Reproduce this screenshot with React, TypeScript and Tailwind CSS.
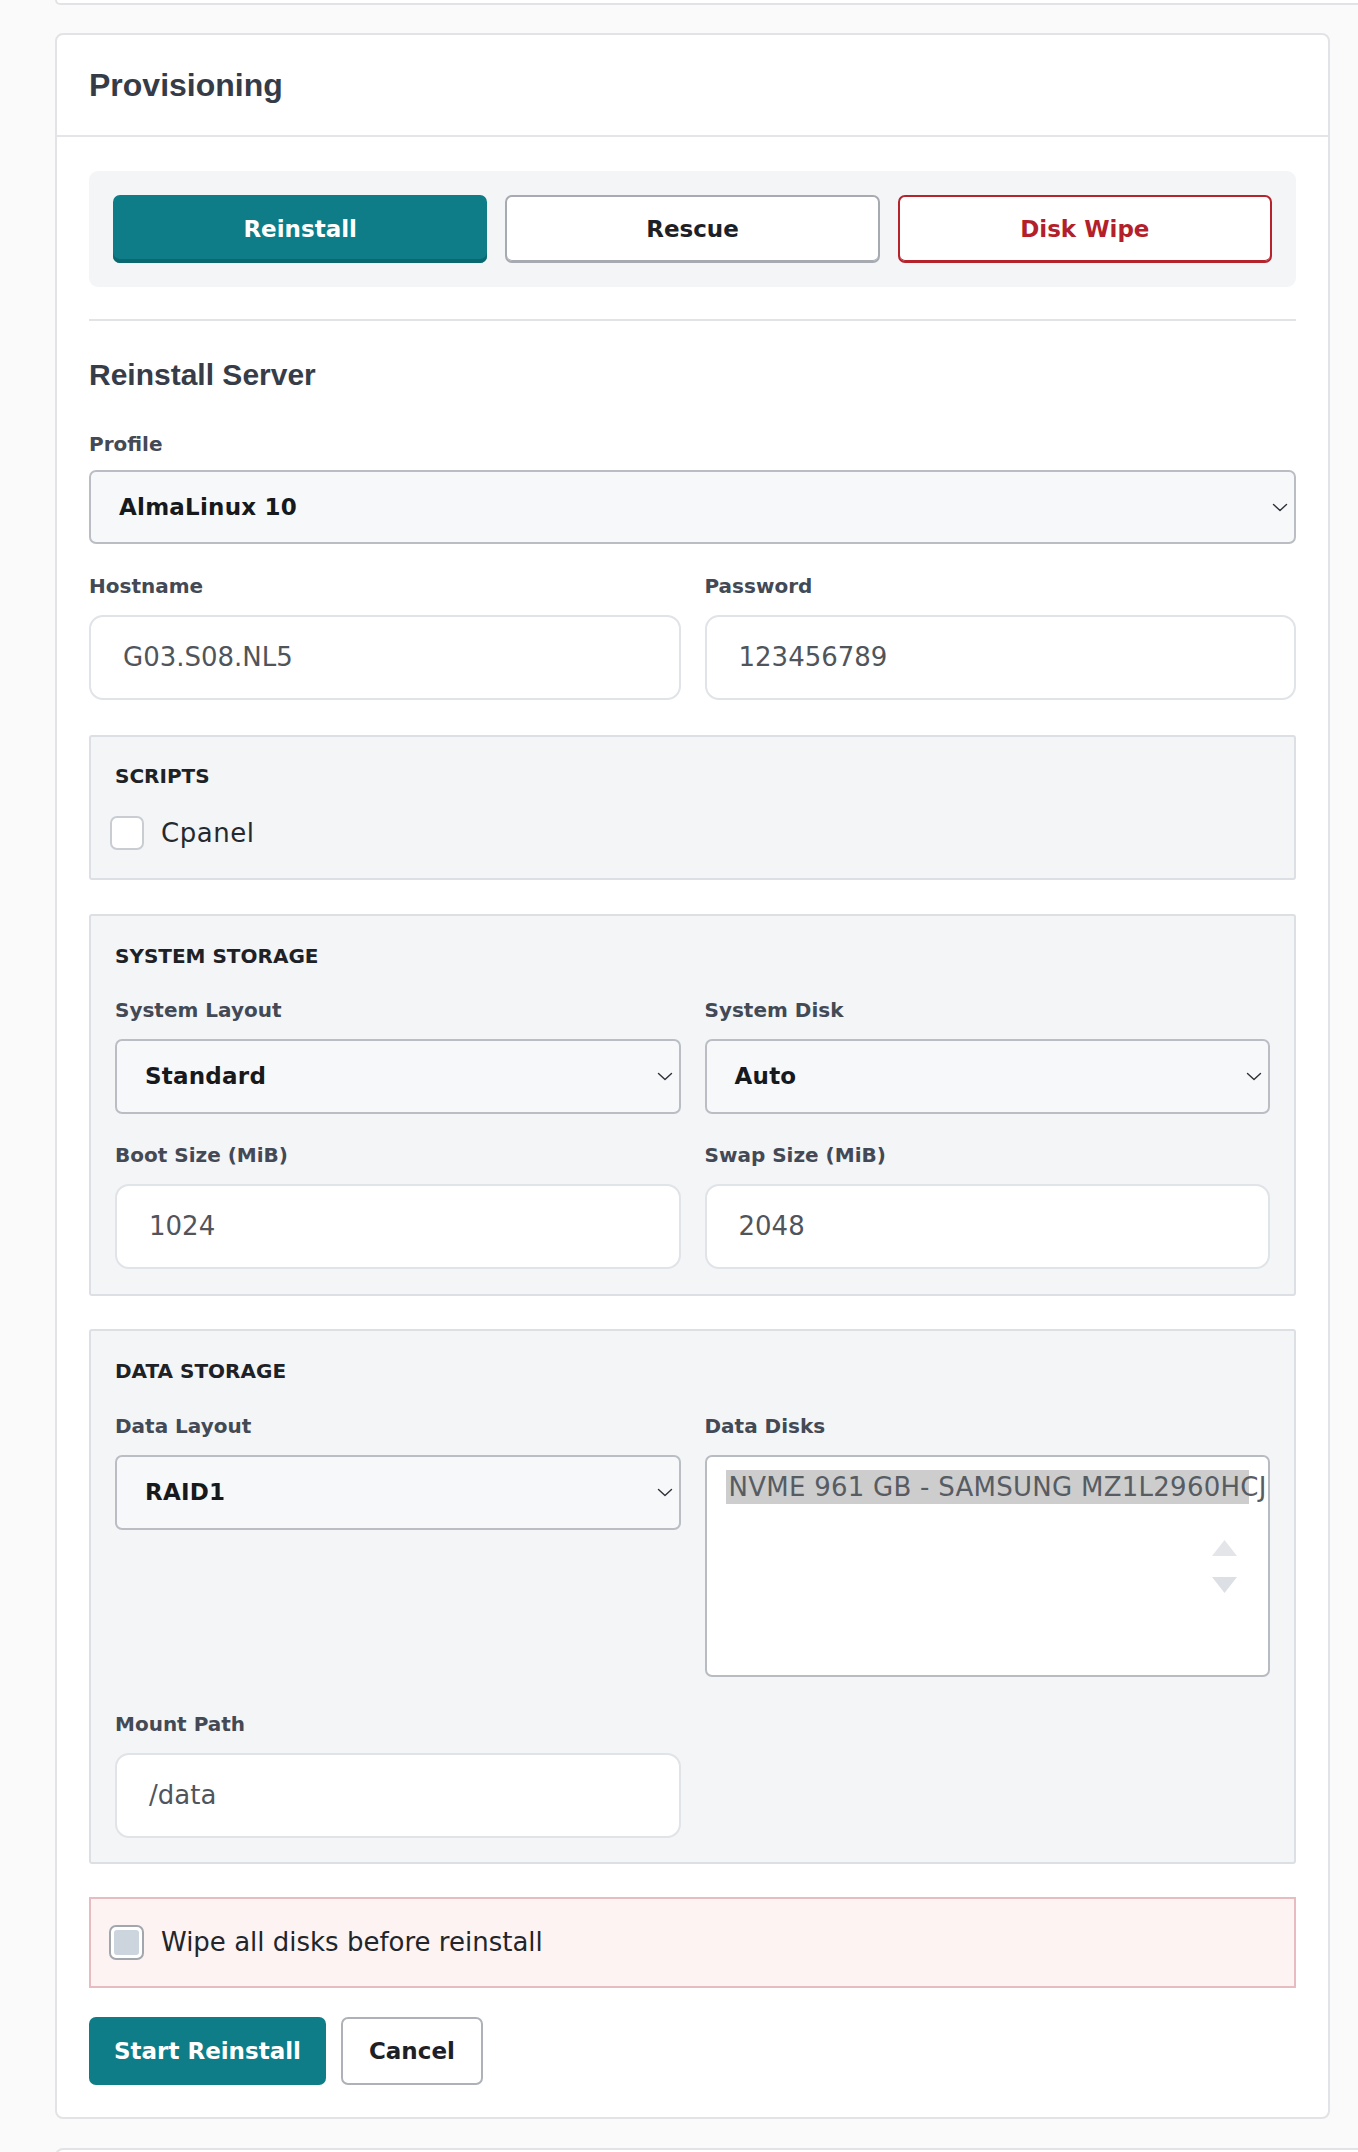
import React from "react";

const Chevron = () => (
  <svg width="16" height="9" viewBox="0 0 16 9" fill="none" aria-hidden="true">
    <path d="M1.5 1.5l6.5 6 6.5-6" stroke="#2d3136" strokeWidth="1.4" strokeLinecap="round" strokeLinejoin="round" />
  </svg>
);

function Label({ children, tight }: { children: React.ReactNode; tight?: boolean }) {
  return (
    <div
      className={
        "font-['DejaVu_Sans',sans-serif] font-bold text-[20px] leading-[26px] text-[#434955] " +
        (tight ? "mb-[13px]" : "mb-[16px]")
      }
    >
      {children}
    </div>
  );
}

function SelectBox({ value, tall }: { value: string; tall?: boolean }) {
  return (
    <div
      className={
        "flex items-center justify-between pl-[28px] pr-[6px] bg-[#f6f8fa] border-2 border-[#babec4] rounded-[7px] " +
        (tall ? "h-[75px]" : "h-[74px]")
      }
    >
      <span className="font-['DejaVu_Sans',sans-serif] font-bold text-[23px] tracking-[0.01em] text-[#17191c]">{value}</span>
      <Chevron />
    </div>
  );
}

function InputBox({ value }: { value: string }) {
  return (
    <div className="h-[85px] flex items-center pl-[32px] bg-white border-2 border-[#e0e3e7] rounded-[14px]">
      <span className="font-['DejaVu_Sans',sans-serif] text-[26px] text-[#50555c]">{value}</span>
    </div>
  );
}

function SectionTitle({ children }: { children: React.ReactNode }) {
  return (
    <div className="font-['DejaVu_Sans',sans-serif] font-bold text-[20px] leading-[26px] text-[#1e2226]">
      {children}
    </div>
  );
}

export default function App() {
  return (
    <div className="h-[2152px] overflow-hidden bg-[#fafafa] pl-[55px] font-['DejaVu_Sans',sans-serif]">
      {/* previous card (bottom edge) */}
      <div className="w-[1340px] h-[5px] border-2 border-t-0 border-[#e1e3e6] rounded-b-[8px] bg-white" />

      {/* Provisioning card */}
      <div className="mt-[28px] w-[1275px] border-2 border-[#e1e3e6] rounded-[8px] bg-white">
        <div className="h-[102px] border-b-2 border-[#e3e5e8] flex items-center px-[32px]">
          <h2 className="font-['Liberation_Sans',Arial,sans-serif] font-bold text-[32px] leading-[38px] text-[#353b47]">
            Provisioning
          </h2>
        </div>

        <div className="px-[32px] pt-[34px] pb-[32px]">
          {/* mode tabs */}
          <div className="bg-[#f3f5f7] rounded-[9px] p-[24px] grid grid-cols-3 gap-[18px]">
            <div className="h-[68px] rounded-[7px] bg-[#0e7d87] shadow-[inset_0_-4px_0_#0a6870] flex items-center justify-center text-white font-bold text-[23px]">
              Reinstall
            </div>
            <div className="h-[68px] rounded-[7px] bg-white border-2 border-[#a7abb1] shadow-[inset_0_-1px_0_#a7abb1] flex items-center justify-center text-[#1d2126] font-bold text-[23px]">
              Rescue
            </div>
            <div className="h-[68px] rounded-[7px] bg-white border-2 border-[#b5232d] shadow-[inset_0_-1px_0_#b5232d] flex items-center justify-center text-[#b31f2b] font-bold text-[23px]">
              Disk Wipe
            </div>
          </div>

          <div className="mt-[32px] h-[2px] bg-[#e2e3e5]" />

          <h3 className="mt-[36px] font-['Liberation_Sans',Arial,sans-serif] font-bold text-[30px] leading-[36px] text-[#363c48]">
            Reinstall Server
          </h3>

          <div className="mt-[38px]">
            <Label tight>Profile</Label>
            <SelectBox value="AlmaLinux 10" />
          </div>

          <div className="mt-[29px] grid grid-cols-2 gap-x-[24px]">
            <div>
              <Label>Hostname</Label>
              <InputBox value="G03.S08.NL5" />
            </div>
            <div>
              <Label>Password</Label>
              <InputBox value="123456789" />
            </div>
          </div>

          {/* Scripts */}
          <div className="mt-[35px] bg-[#f3f5f7] border-2 border-[#dcdfe3] rounded-[3px] px-[24px] pt-[26px] pb-[25px]">
            <SectionTitle>SCRIPTS</SectionTitle>
            <div className="mt-[24px] -ml-[5px] h-[40px] flex items-center gap-[17px]">
              <div className="w-[34px] h-[34px] rounded-[7px] border-2 border-[#c9cdd2] bg-white" />
              <span className="text-[26px] tracking-[0.02em] text-[#26292e]">Cpanel</span>
            </div>
          </div>

          {/* System storage */}
          <div className="mt-[34px] bg-[#f3f5f7] border-2 border-[#dcdfe3] rounded-[3px] px-[24px] pt-[27px] pb-[25px]">
            <SectionTitle>SYSTEM STORAGE</SectionTitle>
            <div className="mt-[28px] grid grid-cols-2 gap-x-[24px] gap-y-[28px]">
              <div>
                <Label>System Layout</Label>
                <SelectBox value="Standard" tall />
              </div>
              <div>
                <Label>System Disk</Label>
                <SelectBox value="Auto" tall />
              </div>
              <div>
                <Label>Boot Size (MiB)</Label>
                <InputBox value="1024" />
              </div>
              <div>
                <Label>Swap Size (MiB)</Label>
                <InputBox value="2048" />
              </div>
            </div>
          </div>

          {/* Data storage */}
          <div className="mt-[33px] bg-[#f3f5f7] border-2 border-[#dcdfe3] rounded-[3px] px-[24px] pt-[27px] pb-[24px]">
            <SectionTitle>DATA STORAGE</SectionTitle>
            <div className="mt-[29px] grid grid-cols-2 gap-x-[24px] gap-y-[34px] items-start">
              <div>
                <Label>Data Layout</Label>
                <SelectBox value="RAID1" tall />
              </div>
              <div>
                <Label>Data Disks</Label>
                <div className="relative h-[222px] bg-white border-2 border-[#b8bcc2] rounded-[7px] pt-[13px] px-[19px] overflow-hidden">
                  <div className="h-[34px] leading-[34px] bg-[#cdcdcd] pl-[3px] whitespace-nowrap text-[26px] tracking-[0.01em] text-[#575c63]">
                    NVME 961 GB - SAMSUNG MZ1L2960HCJ
                  </div>
                  <svg
                    className="absolute left-[505px] top-[83px]"
                    width="25"
                    height="53"
                    viewBox="0 0 25 53"
                    aria-hidden="true"
                  >
                    <polygon points="12.5,0 25,16 0,16" fill="#e3e5e9" />
                    <polygon points="0,37 25,37 12.5,53" fill="#dcdfe4" />
                  </svg>
                </div>
              </div>
              <div>
                <Label>Mount Path</Label>
                <InputBox value="/data" />
              </div>
            </div>
          </div>

          {/* Wipe */}
          <div className="mt-[33px] h-[91px] bg-[#fdf3f3] border-2 border-[#e6bcc0] flex items-center pl-[18px] gap-[17px]">
            <div className="w-[35px] h-[35px] rounded-[7px] border-2 border-[#a2a7ae] bg-white p-[3px]">
              <div className="w-full h-full rounded-[3px] bg-[#ccd4dd]" />
            </div>
            <span className="text-[26px] text-[#222529]">Wipe all disks before reinstall</span>
          </div>

          {/* Actions */}
          <div className="mt-[29px] flex gap-[15px]">
            <div className="h-[68px] px-[25px] rounded-[7px] bg-[#0e7d87] flex items-center text-white font-bold text-[23px]">
              Start Reinstall
            </div>
            <div className="h-[68px] px-[26px] rounded-[7px] bg-white border-2 border-[#aeb2b8] flex items-center text-[#1d2126] font-bold text-[23px]">
              Cancel
            </div>
          </div>
        </div>
      </div>

      {/* next card (top edge) */}
      <div className="mt-[29px] w-[1340px] h-[40px] border-2 border-b-0 border-[#e1e3e6] rounded-t-[8px] bg-white" />
    </div>
  );
}
